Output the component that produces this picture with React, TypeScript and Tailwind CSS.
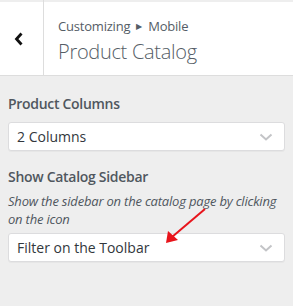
import React from "react";

function Chevron() {
  return (
    <svg width="14" height="8" viewBox="0 0 14 8" className="shrink-0">
      <polyline points="1.5,1.5 7,6.5 12.5,1.5" fill="none" stroke="#c3c4c7" strokeWidth="2" />
    </svg>
  );
}

function Select({ value }: { value: string }) {
  return (
    <div className="flex h-[29px] items-center justify-between rounded-[3px] border border-[#dcdcde] bg-white pl-[8px] pr-[11px] text-[14px] text-[#32373c] shadow-[0_1px_0_rgba(0,0,0,0.03)]">
      <span>{value}</span>
      <Chevron />
    </div>
  );
}

export default function App() {
  return (
    <div className="h-[306px] w-[293px] overflow-hidden bg-[#eeeeee] font-['Open_Sans',sans-serif]">
      <div className="flex h-[76px] border-b border-[#dddddd]">
        <div className="flex w-[44px] flex-col border-r border-[#dddddd]">
          <div className="h-[2px] bg-[#eeeeee]" />
          <div className="flex flex-1 items-center justify-center bg-white pr-[6px] pt-[1px]">
            <svg width="10" height="14" viewBox="0 0 10 14">
              <polyline points="7.5,1.5 2.5,7 7.5,12.5" fill="none" stroke="#111" strokeWidth="2.8" />
            </svg>
          </div>
        </div>
        <div className="flex flex-1 flex-col">
          <div className="h-[2px] bg-[#eeeeee]" />
          <div className="flex flex-1 flex-col bg-white pl-[14px] pt-[15px] text-[#555d66]">
            <div className="flex items-center text-[13px] leading-[18px] tracking-[-0.2px]">
              Customizing
              <span className="mx-[6px] text-[8px]">▶</span>
              Mobile
            </div>
            <div className="mt-[4px] text-[20px] font-light leading-[26px] tracking-[-0.3px]">Product Catalog</div>
          </div>
        </div>
      </div>

      <div className="px-[8px] pt-[19px]">
        <div className="text-[14px] font-semibold leading-[18px] tracking-[-0.3px] text-[#50575e]">Product Columns</div>
        <div className="mt-[9px]">
          <Select value="2 Columns" />
        </div>

        <div className="mt-[17px] text-[14px] font-semibold leading-[18px] tracking-[-0.3px] text-[#50575e]">
          Show Catalog Sidebar
        </div>
        <div className="mt-[6px] text-[13px] italic leading-[18px] tracking-[-0.2px] text-[#50575e]">
          Show the sidebar on the catalog page by clicking on the icon
        </div>
        <div className="relative mt-[5px]">
          <Select value="Filter on the Toolbar" />
        </div>
      </div>

      <svg className="absolute left-0 top-0" width="293" height="306" viewBox="0 0 293 306">
        <line x1="205" y1="209" x2="172" y2="237" stroke="#e8141b" strokeWidth="2" />
        <polygon points="166,243 168,231 178,240" fill="#e8141b" />
      </svg>
    </div>
  );
}
